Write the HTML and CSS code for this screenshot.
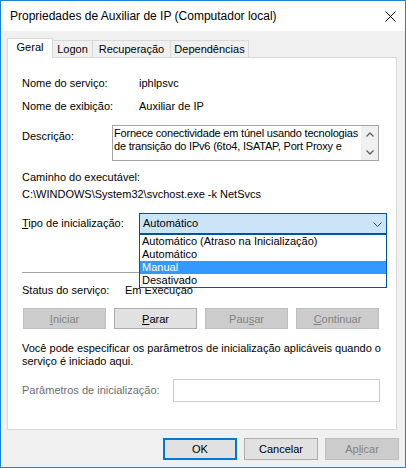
FILE: index.html
```html
<!DOCTYPE html>
<html lang="pt-BR">
<head>
    <meta charset="UTF-8">
    <meta name="viewport" content="width=device-width, initial-scale=1.0">
    <title>Propriedades de Auxiliar de IP (Computador local)</title>
    <link rel="stylesheet" href="styles.css">
</head>
<body>

<div class="window">
    <header class="titlebar">
        <span class="title">Propriedades de Auxiliar de IP (Computador local)</span>
        <svg class="close-icon" width="11" height="11" viewBox="0 0 11 11">
            <path d="M0.5 0.5 L10.5 10.5 M10.5 0.5 L0.5 10.5" stroke="#000" stroke-width="1" fill="none"/>
        </svg>
    </header>

    <div class="dialog">
        <nav class="tabs">
            <div class="tab tab-active tab-geral">Geral</div>
            <div class="tab tab-logon">Logon</div>
            <div class="tab tab-wide">Recuperação</div>
            <div class="tab tab-wide">Dependências</div>
        </nav>

        <section class="panel">
            <div class="field field-name">
                <span class="label label-wide">Nome do serviço:</span>
                <span>iphlpsvc</span>
            </div>
            <div class="field field-display">
                <span class="label label-wide">Nome de exibição:</span>
                <span>Auxiliar de IP</span>
            </div>
            <div class="field field-desc">
                <span class="label label-desc">Descrição:</span>
                <div class="desc-box">
                    <div class="desc-text">Fornece conectividade em túnel usando tecnologias<br>de transição do IPv6 (6to4, ISATAP, Port Proxy e</div>
                    <div class="scrollbar">
                        <svg width="8" height="5" viewBox="0 0 8 5"><path d="M0.5 4.5 L4 1 L7.5 4.5" stroke="#606060" stroke-width="1.3" fill="none"/></svg>
                        <svg width="8" height="5" viewBox="0 0 8 5"><path d="M0.5 0.5 L4 4 L7.5 0.5" stroke="#606060" stroke-width="1.3" fill="none"/></svg>
                    </div>
                </div>
            </div>

            <div class="path-title">Caminho do executável:</div>
            <div class="path-value">C:\WINDOWS\System32\svchost.exe -k NetSvcs</div>

            <div class="field field-startup">
                <span class="label label-wide label-startup"><u>T</u>ipo de inicialização:</span>
                <div class="combo">
                    <span class="combo-value">Automático</span>
                    <svg class="combo-arrow" width="9" height="5" viewBox="0 0 9 5">
                        <path d="M0.5 0.5 L4.5 4.5 L8.5 0.5" stroke="#444" stroke-width="1" fill="none"/>
                    </svg>
                    <ul class="combo-list">
                        <li>Automático (Atraso na Inicialização)</li>
                        <li>Automático</li>
                        <li class="selected">Manual</li>
                        <li>Desativado</li>
                    </ul>
                </div>
            </div>

            <hr class="separator">

            <div class="field field-status">
                <span class="label label-status">Status do serviço:</span>
                <span>Em Execução</span>
            </div>

            <div class="service-buttons">
                <button class="btn" disabled><u>I</u>niciar</button>
                <button class="btn"><u>P</u>arar</button>
                <button class="btn" disabled>Pau<u>s</u>ar</button>
                <button class="btn" disabled><u>C</u>ontinuar</button>
            </div>

            <p class="hint">Você pode especificar os parâmetros de inicialização aplicáveis quando o<br>serviço é iniciado aqui.</p>

            <div class="field field-params">
                <span class="label label-params">Parâmetros de inicialização:</span>
                <div class="params-input"></div>
            </div>
        </section>

        <div class="actions">
            <button class="btn btn-default">OK</button>
            <button class="btn">Cancelar</button>
            <button class="btn" disabled>Ap<u>l</u>icar</button>
        </div>
    </div>
</div>

</body>
</html>
```

FILE: styles.css
```css
* {
    box-sizing: border-box;
}
body {
    margin: 0;
    font-family: "Liberation Sans", Arial, sans-serif;
    font-size: 11px;
    line-height: 13px;
    color: #000;
    background: #fff;
}
.window {
    width: 406px;
    height: 468px;
    border: 1px solid #1883d7;
    display: flex;
    flex-direction: column;
}
.titlebar {
    height: 30px;
    background: #fff;
    display: flex;
    align-items: center;
    justify-content: space-between;
    padding: 0 9px 0 9px;
}
.title {
    font-size: 12px;
    line-height: 15px;
}
.close-icon {
    display: block;
}
.dialog {
    flex: 1;
    background: #f0f0f0;
}
.tabs {
    display: flex;
    align-items: flex-end;
    padding: 7px 0 0 6px;
}
.tab {
    height: 17px;
    border: 1px solid #d9d9d9;
    border-bottom: none;
    background: #f0f0f0;
    text-align: center;
    padding-top: 2px;
    margin-left: -1px;
}
.tab-active {
    height: 20px;
    background: #fff;
    margin-left: 0;
    margin-bottom: -1px;
    padding-top: 2px;
    position: relative;
    z-index: 2;
}
.tab-geral {
    width: 46px;
}
.tab-logon {
    width: 41px;
}
.tab-wide {
    width: 79px;
}
.panel {
    width: 390px;
    height: 373px;
    margin-left: 6px;
    background: #fff;
    border: 1px solid #d9d9d9;
    padding: 19px 0 0 14px;
}
.field {
    display: flex;
    align-items: flex-start;
}
.label {
    flex-shrink: 0;
}
.label-wide {
    width: 117px;
}
.label-desc {
    width: 90px;
    margin-top: 5px;
}
.label-status {
    width: 103px;
}
.label-params {
    width: 151px;
    margin-top: 5px;
    color: #6d6d6d;
}
.label-startup {
    margin-top: 4px;
}
.field-display {
    margin-top: 10px;
}
.field-desc {
    margin-top: 12px;
}
.desc-box {
    width: 267px;
    height: 36px;
    border: 1px solid #a5a5a5;
    display: flex;
}
.desc-text {
    flex: 1;
    padding: 1px 0 0 1px;
    overflow: hidden;
    white-space: nowrap;
    letter-spacing: -0.2px;
}
.scrollbar {
    width: 17px;
    background: #f0f0f0;
    display: flex;
    flex-direction: column;
    justify-content: space-between;
    align-items: center;
    padding: 6px 0 5px;
}
.scrollbar svg {
    display: block;
}
.path-title {
    margin-top: 10px;
}
.path-value {
    margin-top: 4px;
}
.field-startup {
    margin-top: 12px;
}
.combo {
    position: relative;
    width: 248px;
    height: 21px;
    background: #cce4f7;
    border: 1px solid #005499;
    display: flex;
    align-items: center;
    justify-content: space-between;
    padding: 0 4px 0 3px;
}
.combo-arrow {
    display: block;
    margin-top: 1px;
}
.combo-list {
    position: absolute;
    top: 20px;
    left: -1px;
    width: 248px;
    margin: 0;
    padding: 0;
    list-style: none;
    background: #fff;
    border: 1px solid #005499;
    z-index: 3;
}
.combo-list li {
    height: 13px;
    padding-left: 2px;
    white-space: nowrap;
}
.combo-list .selected {
    background: #3399ff;
    color: #fff;
}
.separator {
    width: 359px;
    margin: 38px 0 0 0;
    border: none;
    border-top: 1px solid #a0a0a0;
    height: 0;
}
.field-status {
    margin-top: 11px;
}
.service-buttons {
    display: flex;
    gap: 8px;
    margin: 11px 0 0 1px;
}
.btn {
    width: 83px;
    height: 21px;
    padding: 0;
    font-family: "Liberation Sans", Arial, sans-serif;
    font-size: 11px;
    color: #000;
    background: #e1e1e1;
    border: 1px solid #adadad;
}
.btn:disabled {
    background: #cccccc;
    border-color: #bfbfbf;
    color: #838383;
}
.hint {
    margin: 13px 0 0 0;
    white-space: nowrap;
}
.field-params {
    margin-top: 11px;
}
.params-input {
    width: 207px;
    height: 23px;
    border: 1px solid #cccccc;
    background: #fff;
}
.actions {
    display: flex;
    justify-content: flex-end;
    gap: 7px;
    padding: 8px 6px 0 0;
}
.actions .btn {
    width: 74px;
    height: 22px;
}
.btn-default {
    border: 2px solid #0078d7;
}
```
